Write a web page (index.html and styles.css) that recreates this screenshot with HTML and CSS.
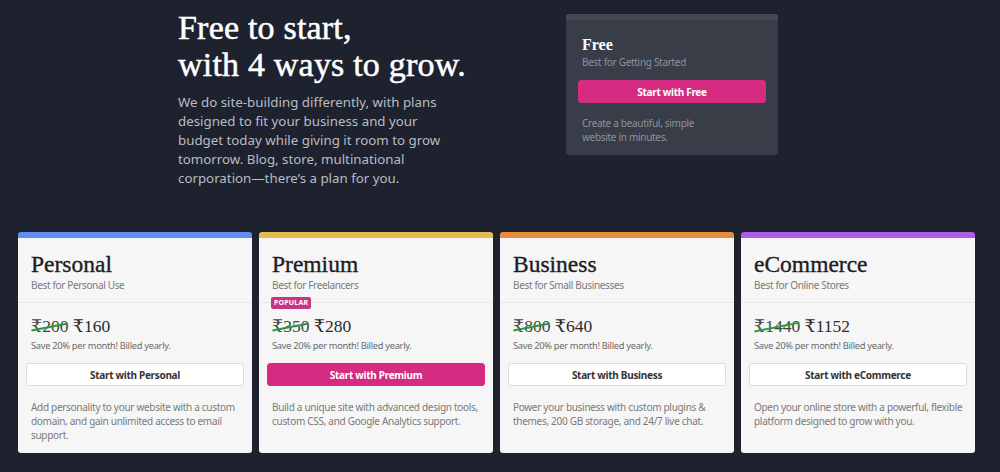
FILE: index.html
```html
<!DOCTYPE html>
<html>
<head>
<meta charset="utf-8">
<link rel="stylesheet" href="styles.css">
</head>
<body>
<div class="page">
  <section class="hero">
    <div class="intro">
      <h1 class="headline">Free to start,<br>with 4 ways to grow.</h1>
      <p class="lead">We do site-building differently, with plans designed to fit your business and your budget today while giving it room to grow tomorrow. Blog, store, multinational corporation—there’s a plan for you.</p>
    </div>
    <div class="free-card">
      <div class="free-band"></div>
      <div class="free-body">
        <h2 class="free-title">Free</h2>
        <div class="free-sub">Best for Getting Started</div>
        <button class="btn btn-pink free-btn">Start with Free</button>
        <p class="free-desc">Create a beautiful, simple<br>website in minutes.</p>
      </div>
    </div>
  </section>

  <section class="plans">
    <div class="plan plan-blue">
      <div class="plan-head">
        <h3 class="plan-title">Personal</h3>
        <div class="plan-sub">Best for Personal Use</div>
      </div>
      <div class="plan-body">
        <div class="price"><span class="old">₹200</span> <span class="new">₹160</span></div>
        <div class="save">Save 20% per month! Billed yearly.</div>
        <button class="btn btn-white">Start with Personal</button>
        <p class="desc">Add personality to your website with a custom domain, and gain unlimited access to email support.</p>
      </div>
    </div>
    <div class="plan plan-yellow">
      <div class="plan-head">
        <h3 class="plan-title">Premium</h3>
        <div class="plan-sub">Best for Freelancers</div>
        <span class="badge">POPULAR</span>
      </div>
      <div class="plan-body">
        <div class="price"><span class="old">₹350</span> <span class="new">₹280</span></div>
        <div class="save">Save 20% per month! Billed yearly.</div>
        <button class="btn btn-pink">Start with Premium</button>
        <p class="desc">Build a unique site with advanced design tools, custom CSS, and Google Analytics support.</p>
      </div>
    </div>
    <div class="plan plan-orange">
      <div class="plan-head">
        <h3 class="plan-title">Business</h3>
        <div class="plan-sub">Best for Small Businesses</div>
      </div>
      <div class="plan-body">
        <div class="price"><span class="old">₹800</span> <span class="new">₹640</span></div>
        <div class="save">Save 20% per month! Billed yearly.</div>
        <button class="btn btn-white">Start with Business</button>
        <p class="desc">Power your business with custom plugins &amp; themes, 200 GB storage, and 24/7 live chat.</p>
      </div>
    </div>
    <div class="plan plan-purple">
      <div class="plan-head">
        <h3 class="plan-title">eCommerce</h3>
        <div class="plan-sub">Best for Online Stores</div>
      </div>
      <div class="plan-body">
        <div class="price"><span class="old">₹1440</span> <span class="new">₹1152</span></div>
        <div class="save">Save 20% per month! Billed yearly.</div>
        <button class="btn btn-white">Start with eCommerce</button>
        <p class="desc">Open your online store with a powerful, flexible platform designed to grow with you.</p>
      </div>
    </div>
  </section>
</div>
</body>
</html>
```

FILE: styles.css
```css
* { box-sizing: border-box; }
html, body { margin: 0; padding: 0; }
body {
  background: #1d222e;
  font-family: "Noto Sans", "Open Sans", sans-serif;
  width: 1000px;
  height: 472px;
  overflow: hidden;
}
.page { padding: 0 25px 0 18px; }

.hero {
  display: flex;
  padding-left: 160px;
  height: 232px;
}
.intro { width: 300px; padding-top: 9px; }
.headline {
  margin: 0;
  font-family: "Liberation Serif", serif;
  font-weight: normal;
  font-size: 34px;
  line-height: 37px;
  color: #ffffff;
  letter-spacing: 0.2px;
  -webkit-text-stroke: 0.5px #ffffff;
}
.lead {
  margin: 10px 0 0;
  font-size: 13.3px;
  line-height: 19px;
  color: #b9bcc3;
  width: 280px;
}

.free-card {
  margin-left: 88px;
  margin-top: 14px;
  width: 212px;
  height: 141px;
  background: #393d48;
  border-radius: 3px;
  overflow: hidden;
}
.free-band { height: 6px; background: #444853; }
.free-body { padding: 15px 12px 0; }
.free-title {
  margin: 0 0 0 4px;
  font-family: "Liberation Serif", serif;
  font-weight: bold;
  font-size: 16px;
  line-height: 20px;
  color: #ffffff;
}
.free-sub {
  margin-left: 4px;
  font-size: 10px;
  letter-spacing: -0.3px;
  line-height: 14px;
  color: #8e929b;
}
.free-btn { margin-top: 11px; height: 22px; }
.free-desc {
  margin: 13px 0 0 4px;
  font-size: 10px;
  letter-spacing: -0.3px;
  line-height: 14px;
  color: #8e929b;
}

.btn {
  display: block;
  width: 100%;
  height: 23px;
  border-radius: 3px;
  font-family: "Noto Sans", sans-serif;
  font-weight: bold;
  font-size: 10px;
  letter-spacing: -0.3px;
  cursor: pointer;
}
.btn-pink { background: #d52c82; border: 1px solid #d52c82; color: #ffffff; }
.btn-white { background: #ffffff; border: 1px solid #dcdcde; color: #333333; }

.plans {
  display: flex;
  gap: 7px;
}
.plan {
  width: 234px;
  height: 221px;
  background: #f6f6f6;
  border-radius: 3px;
  border-top: 6px solid #5b8def;
  overflow: hidden;
}
.plan-blue { border-top-color: #5f8ff0; }
.plan-yellow { border-top-color: #e4bd52; }
.plan-orange { border-top-color: #e98c3e; }
.plan-purple { border-top-color: #ae5ce6; }

.plan-head {
  position: relative;
  height: 65px;
  padding: 12px 13px 0;
  border-bottom: 1px solid #e8e8e8;
}
.plan-title {
  margin: 0;
  font-family: "Liberation Serif", serif;
  font-weight: normal;
  font-size: 23.5px;
  line-height: 28px;
  color: #1d1d1d;
  -webkit-text-stroke: 0.35px #1d1d1d;
}
.plan-sub {
  font-size: 10px;
  letter-spacing: -0.35px;
  line-height: 14px;
  color: #7a7a7a;
}
.badge {
  position: absolute;
  left: 12px;
  bottom: -7px;
  background: #c9357f;
  color: #ffffff;
  font-size: 7px;
  font-weight: bold;
  line-height: 12px;
  padding: 0 3px;
  border-radius: 2px;
  letter-spacing: 0.2px;
}

.plan-body { padding: 12px 8px 0; }
.price {
  padding-left: 5px;
  font-family: "Liberation Serif", "DejaVu Serif", serif;
  font-size: 17.5px;
  line-height: 22px;
  color: #2a2a2a;
}
.old {
  position: relative;
  color: #444;
}
.old::after {
  content: "";
  position: absolute;
  left: 0;
  right: 0;
  top: 50%;
  height: 1.5px;
  background: #2c9a3a;
  transform: rotate(-11deg);
}
.save {
  padding-left: 5px;
  margin-top: 2px;
  font-size: 9.3px;
  letter-spacing: -0.3px;
  line-height: 13px;
  color: #6a6a6a;
}
.plan-body .btn { margin-top: 11px; }
.desc {
  margin: 14px 0 0;
  padding-left: 5px;
  font-size: 10px;
  letter-spacing: -0.3px;
  line-height: 14px;
  color: #7a7a7a;
}
```
